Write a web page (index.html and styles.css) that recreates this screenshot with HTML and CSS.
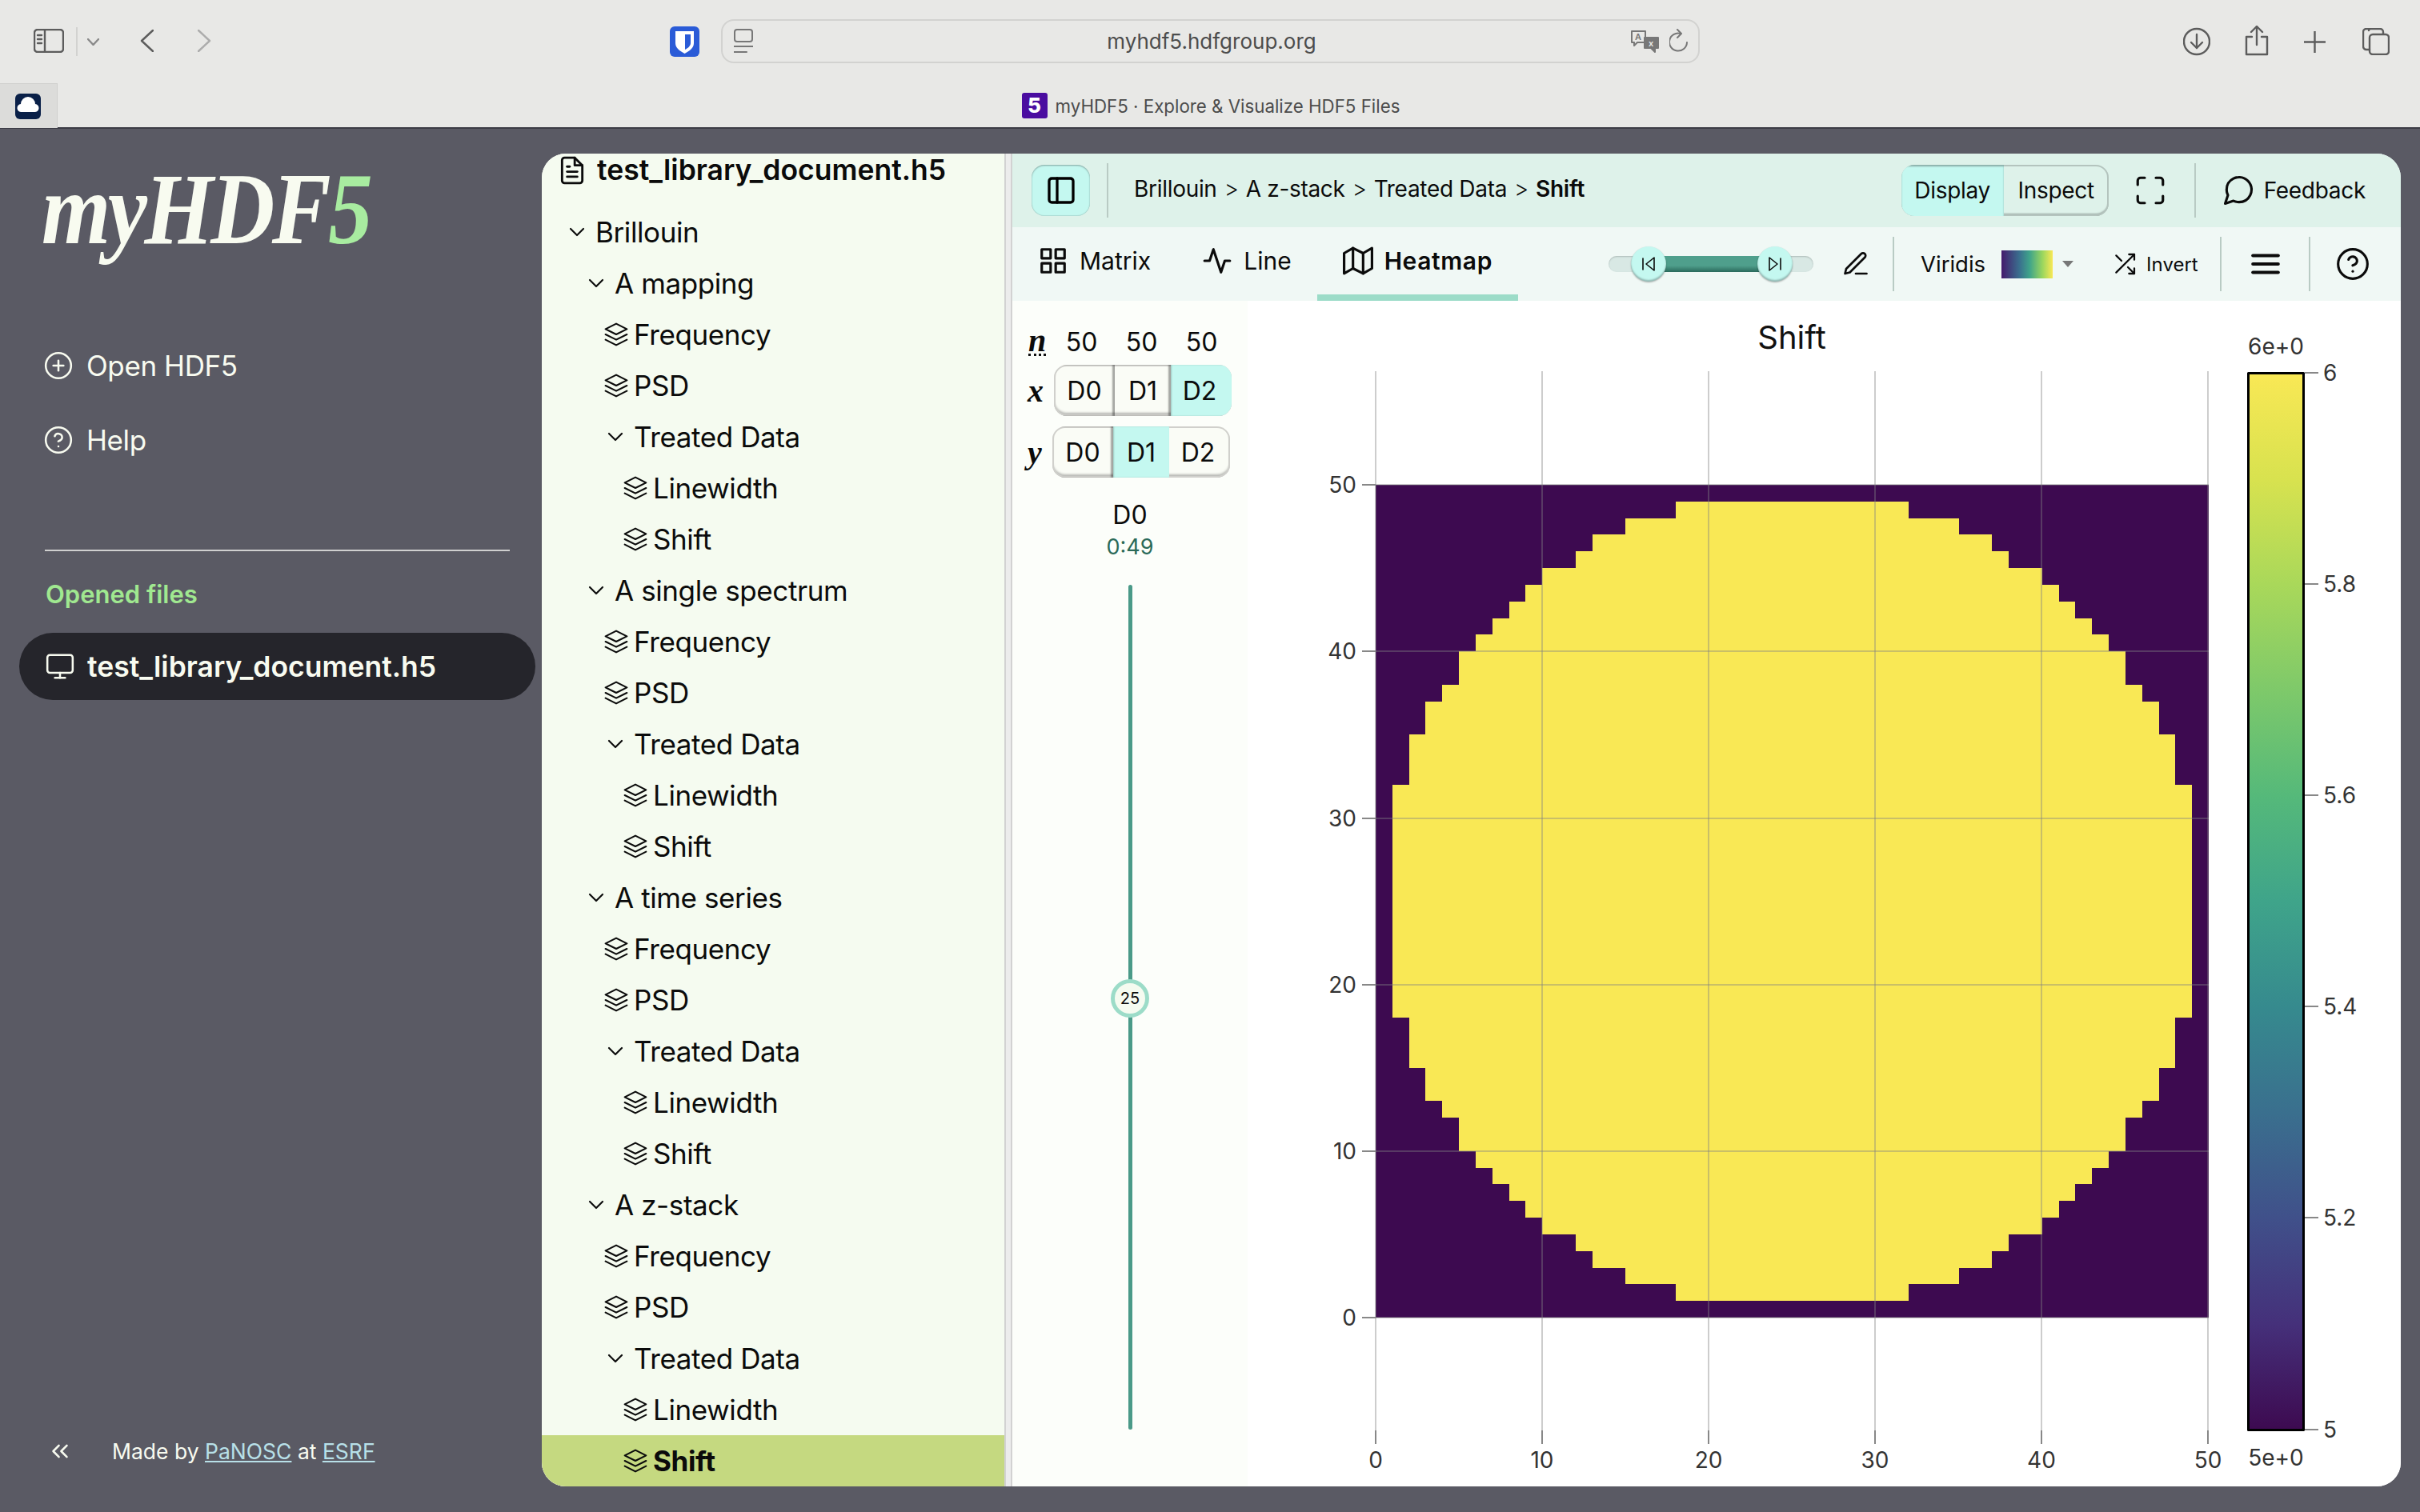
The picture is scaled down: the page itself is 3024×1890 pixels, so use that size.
FILE: index.html
```html
<!DOCTYPE html>
<html lang="en">
<head>
  <meta charset="utf-8">
  <title>myHDF5 · Explore &amp; Visualize HDF5 Files</title>
  <link rel="stylesheet" href="styles.css">
</head>
<body>
  <!-- Icon sprite -->
  <svg class="sprite" xmlns="http://www.w3.org/2000/svg">
    <symbol id="i-chev" viewBox="0 0 24 24"><polyline points="6 9 12 15 18 9"/></symbol>
    <symbol id="i-layers" viewBox="0 0 24 24"><polygon points="12 2 2 7 12 12 22 7 12 2"/><polyline points="2 17 12 22 22 17"/><polyline points="2 12 12 17 22 12"/></symbol>
    <symbol id="i-file" viewBox="0 0 24 24"><path d="M14 2H6a2 2 0 0 0-2 2v16a2 2 0 0 0 2 2h12a2 2 0 0 0 2-2V8z"/><polyline points="14 2 14 8 20 8"/><line x1="16" y1="13" x2="8" y2="13"/><line x1="16" y1="17" x2="8" y2="17"/><polyline points="10 9 9 9 8 9"/></symbol>
    <symbol id="i-plus" viewBox="0 0 24 24"><circle cx="12" cy="12" r="10"/><line x1="12" y1="8" x2="12" y2="16"/><line x1="8" y1="12" x2="16" y2="12"/></symbol>
    <symbol id="i-help" viewBox="0 0 24 24"><circle cx="12" cy="12" r="10"/><path d="M9.09 9a3 3 0 0 1 5.83 1c0 2-3 3-3 3"/><line x1="12" y1="17" x2="12.01" y2="17"/></symbol>
    <symbol id="i-monitor" viewBox="0 0 24 24"><rect x="2" y="3" width="20" height="14" rx="2"/><line x1="8" y1="21" x2="16" y2="21"/><line x1="12" y1="17" x2="12" y2="21"/></symbol>
    <symbol id="i-chevs" viewBox="0 0 24 24"><polyline points="11 17 6 12 11 7"/><polyline points="18 17 13 12 18 7"/></symbol>
    <symbol id="i-sidebar" viewBox="0 0 24 24"><rect x="3" y="3" width="18" height="18" rx="2"/><line x1="9" y1="3" x2="9" y2="21"/></symbol>
    <symbol id="i-max" viewBox="0 0 24 24"><path d="M8 3H5a2 2 0 0 0-2 2v3m18 0V5a2 2 0 0 0-2-2h-3m0 18h3a2 2 0 0 0 2-2v-3M3 16v3a2 2 0 0 0 2 2h3"/></symbol>
    <symbol id="i-msg" viewBox="0 0 24 24"><path d="M21 11.5a8.38 8.38 0 0 1-.9 3.8 8.5 8.5 0 0 1-7.6 4.7 8.38 8.38 0 0 1-3.8-.9L3 21l1.9-5.7a8.38 8.38 0 0 1-.9-3.8 8.5 8.5 0 0 1 4.7-7.6 8.38 8.38 0 0 1 3.8-.9h.5a8.48 8.48 0 0 1 8 8v.5z"/></symbol>
    <symbol id="i-grid" viewBox="0 0 24 24"><rect x="3" y="3" width="7" height="7"/><rect x="14" y="3" width="7" height="7"/><rect x="14" y="14" width="7" height="7"/><rect x="3" y="14" width="7" height="7"/></symbol>
    <symbol id="i-line" viewBox="0 0 24 24"><polyline points="22 12 18 12 15 21 9 3 6 12 2 12"/></symbol>
    <symbol id="i-map" viewBox="0 0 24 24"><polygon points="1 6 1 22 8 18 16 22 23 18 23 2 16 6 8 2 1 6"/><line x1="8" y1="2" x2="8" y2="18"/><line x1="16" y1="6" x2="16" y2="22"/></symbol>
    <symbol id="i-pen" viewBox="0 0 24 24"><path d="M12 20h9"/><path d="M16.5 3.5a2.121 2.121 0 0 1 3 3L7 19l-4 1 1-4L16.5 3.5z"/></symbol>
    <symbol id="i-shuffle" viewBox="0 0 24 24"><polyline points="16 3 21 3 21 8"/><line x1="4" y1="20" x2="21" y2="3"/><polyline points="21 16 21 21 16 21"/><line x1="15" y1="15" x2="21" y2="21"/><line x1="4" y1="4" x2="9" y2="9"/></symbol>
    <symbol id="i-menu" viewBox="0 0 24 24"><line x1="3" y1="12" x2="21" y2="12"/><line x1="3" y1="6" x2="21" y2="6"/><line x1="3" y1="18" x2="21" y2="18"/></symbol>
    <symbol id="i-back" viewBox="0 0 24 24"><polygon points="19 20 9 12 19 4 19 20"/><line x1="5" y1="19" x2="5" y2="5"/></symbol>
    <symbol id="i-next" viewBox="0 0 24 24"><polygon points="5 4 15 12 5 20 5 4"/><line x1="19" y1="5" x2="19" y2="19"/></symbol>
  </svg>

  <!-- Browser chrome -->
  <header class="chrome">
    <div class="toolbar">
      <svg class="c-sidebar" viewBox="0 0 38 30"><rect x="1" y="1" width="36" height="28" rx="4"/><line x1="14" y1="1" x2="14" y2="29"/><line x1="5" y1="8" x2="10" y2="8"/><line x1="5" y1="13" x2="10" y2="13"/><line x1="5" y1="18" x2="10" y2="18"/></svg>
      <span class="c-sep"></span>
      <svg class="c-drop" viewBox="0 0 15 9"><polyline points="1 1 7.5 8 14 1"/></svg>
      <svg class="c-back" viewBox="0 0 17 28"><polyline points="16 1 2 14 16 27"/></svg>
      <svg class="c-fwd" viewBox="0 0 17 28"><polyline points="1 1 15 14 1 27"/></svg>
      <svg class="c-warden" viewBox="0 0 37 38"><rect width="37" height="38" rx="6" fill="#2a5bd7"/><path d="M7 6h23v15c0 6-6 10-11.500 13C13 31 7 27 7 21z" fill="#fff"/><path d="M19 10h7v11c0 3-3 6-7 8z" fill="#2a5bd7"/></svg>
      <div class="urlbar">
        <svg class="u-page" viewBox="0 0 24 32"><rect x="1" y="1" width="22" height="15" rx="3"/><line x1="0" y1="22" x2="24" y2="22"/><line x1="0" y1="29" x2="16" y2="29"/></svg>
        <span class="u-text">myhdf5.hdfgroup.org</span>
        <svg class="u-trans" viewBox="0 0 37 30"><path d="M2 2h17v14H9l-4 4v-4H2z" class="thin"/><path d="M18 10h17v13h-4v5l-5-5h-8z" class="solid"/><text class="t-a" x="6" y="13">A</text><text class="t-x" x="23" y="21">x</text></svg>
        <svg class="u-reload" viewBox="0 0 24 32"><path d="M14 6a11 11 0 1 0 8 11"/><polyline points="10 1 15 6 10 11"/></svg>
      </div>
      <svg class="c-dl" viewBox="0 0 34 36"><circle cx="17" cy="18" r="16"/><line x1="17" y1="9" x2="17" y2="26"/><polyline points="10 19 17 26 24 19"/></svg>
      <svg class="c-share" viewBox="0 0 30 38"><path d="M9 14H2v22h26V14h-7"/><line x1="15" y1="1" x2="15" y2="24"/><polyline points="8 8 15 1 22 8"/></svg>
      <svg class="c-plus" viewBox="0 0 27 27"><line x1="13.500" y1="0" x2="13.500" y2="27"/><line x1="0" y1="13.500" x2="27" y2="13.500"/></svg>
      <svg class="c-tabs" viewBox="0 0 34 34"><path d="M8 3a2 2 0 0 1 2-2h12a4 4 0 0 1 4 4v2"/><rect x="9" y="8" width="24" height="25" rx="4"/><path d="M9 27H5a4 4 0 0 1-4-4V5a4 4 0 0 1 4-4h4"/></svg>
    </div>
    <div class="tabs">
      <div class="pinned">
        <svg viewBox="0 0 32 32"><rect width="32" height="32" rx="6" fill="#0a2048"/><path d="M8 23a5 5 0 0 1-1-10 9 9 0 0 1 18 0 5 5 0 0 1-1 10z" fill="#fff"/></svg>
      </div>
      <div class="tab-title"><span class="favicon">5</span>myHDF5 · Explore &amp; Visualize HDF5 Files</div>
    </div>
  </header>

  <main class="app">
    <!-- Left navigation -->
    <aside class="nav">
      <div class="logo">myHDF<em>5</em></div>
      <a class="nav-link nav-first"><svg class="ico-nav"><use href="#i-plus"/></svg>Open HDF5</a>
      <a class="nav-link"><svg class="ico-nav"><use href="#i-help"/></svg>Help</a>
      <hr class="nav-rule">
      <h2 class="nav-head">Opened files</h2>
      <div class="file-pill"><svg class="ico-nav"><use href="#i-monitor"/></svg>test_library_document.h5</div>
      <footer class="nav-foot">
        <svg class="ico-chevs"><use href="#i-chevs"/></svg>
        <span>Made by <a>PaNOSC</a> at <a>ESRF</a></span>
      </footer>
    </aside>

    <div class="card">
      <!-- File tree -->
      <section class="tree">
        <div class="tree-head"><svg class="ico-file"><use href="#i-file"/></svg>test_library_document.h5</div>
        <div class="row l0"><svg><use href="#i-chev"/></svg>Brillouin</div>

        <div class="row l1"><svg><use href="#i-chev"/></svg>A mapping</div>
        <div class="row l2 leaf"><svg><use href="#i-layers"/></svg>Frequency</div>
        <div class="row l2 leaf"><svg><use href="#i-layers"/></svg>PSD</div>
        <div class="row l2"><svg><use href="#i-chev"/></svg>Treated Data</div>
        <div class="row l3 leaf"><svg><use href="#i-layers"/></svg>Linewidth</div>
        <div class="row l3 leaf"><svg><use href="#i-layers"/></svg>Shift</div>

        <div class="row l1"><svg><use href="#i-chev"/></svg>A single spectrum</div>
        <div class="row l2 leaf"><svg><use href="#i-layers"/></svg>Frequency</div>
        <div class="row l2 leaf"><svg><use href="#i-layers"/></svg>PSD</div>
        <div class="row l2"><svg><use href="#i-chev"/></svg>Treated Data</div>
        <div class="row l3 leaf"><svg><use href="#i-layers"/></svg>Linewidth</div>
        <div class="row l3 leaf"><svg><use href="#i-layers"/></svg>Shift</div>

        <div class="row l1"><svg><use href="#i-chev"/></svg>A time series</div>
        <div class="row l2 leaf"><svg><use href="#i-layers"/></svg>Frequency</div>
        <div class="row l2 leaf"><svg><use href="#i-layers"/></svg>PSD</div>
        <div class="row l2"><svg><use href="#i-chev"/></svg>Treated Data</div>
        <div class="row l3 leaf"><svg><use href="#i-layers"/></svg>Linewidth</div>
        <div class="row l3 leaf"><svg><use href="#i-layers"/></svg>Shift</div>

        <div class="row l1"><svg><use href="#i-chev"/></svg>A z-stack</div>
        <div class="row l2 leaf"><svg><use href="#i-layers"/></svg>Frequency</div>
        <div class="row l2 leaf"><svg><use href="#i-layers"/></svg>PSD</div>
        <div class="row l2"><svg><use href="#i-chev"/></svg>Treated Data</div>
        <div class="row l3 leaf"><svg><use href="#i-layers"/></svg>Linewidth</div>
        <div class="row l3 leaf selected"><svg><use href="#i-layers"/></svg>Shift</div>
      </section>

      <div class="split"></div>

      <!-- Visualizer -->
      <section class="vis">
        <div class="bar-top">
          <button class="btn-toggle"><svg class="ico-toggle"><use href="#i-sidebar"/></svg></button>
          <span class="sep sep-top"></span>
          <nav class="crumbs">
            <span>Brillouin</span><i>&gt;</i><span>A z-stack</span><i>&gt;</i><span>Treated Data</span><i>&gt;</i><b>Shift</b>
          </nav>
          <div class="switch">
            <span class="on">Display</span><span>Inspect</span>
          </div>
          <svg class="ico-max"><use href="#i-max"/></svg>
          <span class="sep sep-feedback"></span>
          <svg class="ico-msg"><use href="#i-msg"/></svg>
          <span class="feedback">Feedback</span>
        </div>

        <div class="bar-tools">
          <div class="tab"><svg><use href="#i-grid"/></svg>Matrix</div>
          <div class="tab"><svg><use href="#i-line"/></svg>Line</div>
          <div class="tab active"><svg><use href="#i-map"/></svg>Heatmap</div>

          <div class="range">
            <div class="range-fill"></div>
            <span class="thumb thumb-a"><svg><use href="#i-back"/></svg></span>
            <span class="thumb thumb-b"><svg><use href="#i-next"/></svg></span>
          </div>
          <svg class="ico-pen"><use href="#i-pen"/></svg>
          <span class="sep sep-a"></span>
          <span class="cmap-name">Viridis</span>
          <span class="cmap-swatch"></span>
          <span class="caret"></span>
          <svg class="ico-shuffle"><use href="#i-shuffle"/></svg>
          <span class="invert">Invert</span>
          <span class="sep sep-b"></span>
          <svg class="ico-menu"><use href="#i-menu"/></svg>
          <span class="sep sep-c"></span>
          <svg class="ico-help"><use href="#i-help"/></svg>
        </div>

        <div class="vis-body">
          <div class="dims">
            <div class="dim-row dim-n">
              <span class="axis axis-n">n</span><span class="n-val">50</span><span class="n-val">50</span><span class="n-val">50</span>
            </div>
            <div class="dim-row dim-x">
              <span class="axis">x</span>
              <div class="seg"><span>D0</span><span>D1</span><span class="on">D2</span></div>
            </div>
            <div class="dim-row dim-y">
              <span class="axis">y</span>
              <div class="seg"><span>D0</span><span class="on">D1</span><span>D2</span></div>
            </div>
            <div class="slice-name">D0</div>
            <div class="slice-range">0:49</div>
            <div class="slice-track"><span class="slice-thumb">25</span></div>
          </div>

          <div class="plot">
            <svg class="plot-svg" viewBox="1559 376 1441 1482">
              <defs>
                <linearGradient id="viridis" x1="0" y1="0" x2="0" y2="1">
                  <stop offset="0" stop-color="#f9e855"/>
                  <stop offset=".1" stop-color="#d8e24f"/>
                  <stop offset=".2" stop-color="#a9d85a"/>
                  <stop offset=".3" stop-color="#7ec96a"/>
                  <stop offset=".4" stop-color="#55b97a"/>
                  <stop offset=".5" stop-color="#3fa48a"/>
                  <stop offset=".6" stop-color="#368a8e"/>
                  <stop offset=".7" stop-color="#3a6f8e"/>
                  <stop offset=".8" stop-color="#40508a"/>
                  <stop offset=".9" stop-color="#45307a"/>
                  <stop offset="1" stop-color="#3d0a50"/>
                </linearGradient>
              </defs>

              <text class="p-title" x="2239" y="436">Shift</text>

              <!-- heatmap: 50 x 50 cells, 20.82px each -->
              <svg class="heat" x="1719" y="606" width="1041" height="1041" viewBox="0 0 50 50" shape-rendering="crispEdges">
                <rect width="50" height="50" fill="#3d0a50"/>
                <path fill="#f9e855" d="M18 1H32V2H35V3H37V4H38V5H40V6H41V7H42V8H43V9H44V10H45V12H46V13H47V15H48V18H49V32H48V35H47V37H46V38H45V40H44V41H43V42H42V43H41V44H40V45H38V46H37V47H35V48H32V49H18V48H15V47H13V46H12V45H10V44H9V43H8V42H7V41H6V40H5V38H4V37H3V35H2V32H1V18H2V15H3V13H4V12H5V10H6V9H7V8H8V7H9V6H10V5H12V4H13V3H15V2H18Z"/>
              </svg>

              <g class="grid">
                <line x1="1719" y1="464" x2="1719" y2="1788"/>
                <line x1="1927" y1="464" x2="1927" y2="1788"/>
                <line x1="2135" y1="464" x2="2135" y2="1788"/>
                <line x1="2343" y1="464" x2="2343" y2="1788"/>
                <line x1="2551" y1="464" x2="2551" y2="1788"/>
                <line x1="2759" y1="464" x2="2759" y2="1788"/>
                <line x1="1719" y1="606" x2="2760" y2="606"/>
                <line x1="1719" y1="814" x2="2760" y2="814"/>
                <line x1="1719" y1="1023" x2="2760" y2="1023"/>
                <line x1="1719" y1="1231" x2="2760" y2="1231"/>
                <line x1="1719" y1="1439" x2="2760" y2="1439"/>
                <line x1="1719" y1="1647" x2="2760" y2="1647"/>
              </g>

              <g class="ticks">
                <line x1="1719" y1="1788" x2="1719" y2="1805"/>
                <line x1="1927" y1="1788" x2="1927" y2="1805"/>
                <line x1="2135" y1="1788" x2="2135" y2="1805"/>
                <line x1="2343" y1="1788" x2="2343" y2="1805"/>
                <line x1="2551" y1="1788" x2="2551" y2="1805"/>
                <line x1="2759" y1="1788" x2="2759" y2="1805"/>
                <line x1="1702" y1="606" x2="1719" y2="606"/>
                <line x1="1702" y1="814" x2="1719" y2="814"/>
                <line x1="1702" y1="1023" x2="1719" y2="1023"/>
                <line x1="1702" y1="1231" x2="1719" y2="1231"/>
                <line x1="1702" y1="1439" x2="1719" y2="1439"/>
                <line x1="1702" y1="1647" x2="1719" y2="1647"/>
                <line x1="2880" y1="466" x2="2897" y2="466"/>
                <line x1="2880" y1="730" x2="2897" y2="730"/>
                <line x1="2880" y1="994" x2="2897" y2="994"/>
                <line x1="2880" y1="1258" x2="2897" y2="1258"/>
                <line x1="2880" y1="1522" x2="2897" y2="1522"/>
                <line x1="2880" y1="1787" x2="2897" y2="1787"/>
              </g>

              <g class="lbl lbl-x">
                <text x="1719" y="1835">0</text>
                <text x="1927" y="1835">10</text>
                <text x="2135" y="1835">20</text>
                <text x="2343" y="1835">30</text>
                <text x="2551" y="1835">40</text>
                <text x="2759" y="1835">50</text>
              </g>
              <g class="lbl lbl-y">
                <text x="1695" y="616">50</text>
                <text x="1695" y="824">40</text>
                <text x="1695" y="1033">30</text>
                <text x="1695" y="1241">20</text>
                <text x="1695" y="1449">10</text>
                <text x="1695" y="1657">0</text>
              </g>

              <rect class="cbar" x="2809.500" y="466.500" width="69" height="1321" fill="url(#viridis)"/>
              <g class="lbl lbl-c">
                <text x="2903" y="476">6</text>
                <text x="2903" y="740">5.8</text>
                <text x="2903" y="1004">5.6</text>
                <text x="2903" y="1268">5.4</text>
                <text x="2903" y="1532">5.2</text>
                <text x="2903" y="1797">5</text>
              </g>
              <g class="lbl lbl-x">
                <text x="2844" y="443">6e+0</text>
                <text x="2844" y="1832">5e+0</text>
              </g>
            </svg>
          </div>
        </div>
      </section>
    </div>
  </main>
</body>
</html>
```
FILE: styles.css
```css
/* Reset & variables */
* { box-sizing: border-box; margin: 0; padding: 0; }
:root {
  --chrome: #e8e8e6;
  --slate: #5a5a64;
  --ink: #0b0b0b;
  --cream: #f8fbf0;
  --mint: #c4f8f0;
  --teal: #4a9a88;
  --rule: #b9cbc4;
}
html, body { width: 3024px; height: 1890px; overflow: hidden; }
body {
  font-family: "Inter", "Liberation Sans", sans-serif;
  color: var(--ink);
  background: var(--slate);
  display: flex;
  flex-direction: column;
}
svg { fill: none; stroke: currentColor; stroke-width: 2; stroke-linecap: round; stroke-linejoin: round; flex: none; }
.sprite { width: 0; height: 0; position: absolute; }

/* Browser chrome */
.chrome { height: 161px; background: var(--chrome); border-bottom: 2px solid #3b3b45; flex: none; }
.toolbar { height: 104px; display: flex; align-items: center; padding-left: 42px; color: #5c5c5c; }
.toolbar svg { stroke-width: 2.4; }
.c-sidebar { width: 38px; height: 30px; margin-top: -3px; }
.c-sep { width: 2px; height: 36px; background: #d2d2d0; margin-left: 15px; }
.c-drop { width: 15px; height: 9px; margin-left: 12px; color: #8a8a8a; }
.c-back { width: 17px; height: 28px; margin-left: 51px; margin-top: -2px; }
.c-fwd { width: 17px; height: 28px; margin-left: 55px; margin-top: -2px; color: #acacac; }
.toolbar .c-warden { width: 37px; height: 38px; margin-left: 573px; stroke: none; }
.urlbar {
  width: 1223px; height: 55px; margin-left: 27px; margin-top: -1px;
  border: 2px solid #d2d2d0; border-radius: 16px;
  display: flex; align-items: center; padding: 0 12px 0 14px;
}
.toolbar .u-page { width: 24px; height: 32px; stroke-width: 2; color: #777; }
.u-text { flex: 1; text-align: center; font-size: 26px; color: #4c4c4c; padding-left: 50px; }
.toolbar .u-trans { width: 37px; height: 30px; stroke-width: 2; color: #777; }
.u-trans .solid { fill: #777; }
.u-trans text { stroke: none; font-size: 11px; font-weight: 600; }
.t-a { fill: #777; }
.t-x { fill: #e8e8e6; }
.toolbar .u-reload { width: 24px; height: 32px; margin-left: 12px; stroke-width: 2; color: #777; }
.c-dl { width: 34px; height: 36px; margin-left: 604px; }
.c-share { width: 30px; height: 38px; margin-left: 43px; margin-top: -3px; }
.c-plus { width: 27px; height: 27px; margin-left: 44px; }
.c-tabs { width: 34px; height: 34px; margin-left: 46px; }

.tabs { height: 56px; position: relative; display: flex; justify-content: center; align-items: center; }
.pinned { position: absolute; left: 0; top: 0; width: 72px; height: 56px; background: #dcdcda; border-right: 1px solid #d0d0ce; border-top: 1px solid #d0d0ce; padding: 12px 0 0 19px; }
.pinned svg { width: 32px; height: 32px; stroke: none; display: block; }
.tab-title { display: flex; align-items: center; font-size: 22.3px; color: #4c4c4c; margin-left: 2px; }
.favicon {
  width: 32px; height: 32px; border-radius: 3px; background: #4a0ca0; color: #fff;
  font-weight: 800; font-size: 26px; text-align: center; line-height: 32px; margin-right: 10px;
}

/* Page */
.app { flex: 1; display: flex; min-height: 0; }
.nav { width: 677px; flex: none; color: var(--cream); position: relative; padding-left: 24px; }
.logo {
  font-family: "Liberation Serif", serif; font-style: italic; font-weight: 700;
  font-size: 126px; line-height: 130px; color: var(--cream);
  margin: 36px 0 0 28px; letter-spacing: -4px; white-space: nowrap;
  transform: scaleX(.88); transform-origin: left center;
}
.logo em { color: #a8eca0; }
.nav-link { display: flex; align-items: center; font-size: 35px; letter-spacing: -.4px; height: 60px; padding-left: 30px; gap: 16px; }
.nav-first { margin-top: 100px; margin-bottom: 33px; }
.ico-nav { width: 38px; height: 38px; stroke-width: 1.6; flex: none; }
.nav-rule { border: 0; height: 2px; background: #cfcfcf; width: 581px; margin: 107px 0 0 32px; }
.nav-head { font-size: 31px; font-weight: 600; color: #a0e890; margin: 35px 0 0 33px; line-height: 38px; }
.file-pill {
  width: 645px; height: 84px; margin-top: 29px; border-radius: 42px; background: #25252b;
  display: flex; align-items: center; gap: 15px; padding-left: 32px; font-size: 35.500px; font-weight: 600;
}
.nav-foot { position: absolute; left: 0; bottom: 59px; display: flex; align-items: center; font-size: 26.500px; padding-left: 58px; }
.ico-chevs { width: 34px; height: 34px; margin-right: 48px; stroke-width: 1.8; }
.nav-foot a { color: #b8e0e8; text-decoration: underline; }

/* Card */
.card { width: 2323px; height: 1666px; margin-top: 31px; border-radius: 30px; overflow: hidden; display: flex; background: #fff; }

/* File tree */
.tree { width: 578px; flex: none; background: #f5fbf0; font-size: 35px; letter-spacing: -.4px; }
.tree-head { height: 66px; display: flex; align-items: flex-start; gap: 12px; padding: 1px 0 0 19px; font-weight: 600; font-size: 35.500px; letter-spacing: 0; line-height: 40px; }
.ico-file { width: 38px; height: 38px; margin-top: 1px; stroke-width: 1.8; }
.row { height: 64px; display: flex; align-items: center; white-space: nowrap; }
.row svg { width: 32px; height: 32px; margin-right: 7px; stroke-width: 1.6; }
.row.leaf svg { margin-right: 6px; margin-left: 1px; }
.l0 { padding-left: 28px; }
.l1 { padding-left: 52px; }
.l2 { padding-left: 76px; }
.l3 { padding-left: 100px; }
.selected { background: #c5d980; font-weight: 700; }
.split { width: 10px; flex: none; background: #ececec; border-left: 2px solid #d2d2d2; border-right: 2px solid #d2d2d2; }

/* Visualizer */
.vis { flex: 1; display: flex; flex-direction: column; min-width: 0; }
.sep { width: 2px; background: var(--rule); flex: none; }
.bar-top { height: 92px; background: #def2ea; display: flex; align-items: center; padding-left: 24px; flex: none; }
.btn-toggle {
  width: 73px; height: 64px; border: 0; border-radius: 16px; background: var(--mint);
  box-shadow: inset 0 1px 2px rgba(0,0,0,.35), inset 0 -1px 1px rgba(0,0,0,.1);
  display: flex; align-items: center; justify-content: center;
}
.ico-toggle { width: 40px; height: 40px; }
.sep-top { height: 68px; margin-left: 21px; }
.crumbs { display: flex; align-items: center; font-size: 28px; letter-spacing: -.3px; margin-left: 32px; margin-top: -4px; }
.crumbs i { font-style: normal; font-weight: 300; margin: 0 9px; }
.crumbs b { font-weight: 600; }
.switch {
  margin-left: auto; display: flex; height: 64px; border-radius: 16px; overflow: hidden; font-size: 28px; letter-spacing: -.3px;
  box-shadow: inset 0 0 0 2px #b4c4be, inset 0 -3px 2px rgba(0,0,0,.3);
}
.switch span { display: flex; align-items: center; justify-content: center; width: 128px; }
.switch span.on { background: var(--mint); box-shadow: inset 0 2px 2px rgba(0,0,0,.3); }
.switch span + span { width: 131px; }
.ico-max { width: 42px; height: 42px; margin-left: 31px; stroke-width: 1.8; }
.sep-feedback { height: 68px; margin-left: 34px; }
.ico-msg { width: 44px; height: 44px; margin-left: 31px; stroke-width: 1.7; }
.feedback { font-size: 28px; letter-spacing: -.3px; margin-left: 10px; margin-right: 44px; }

.bar-tools { height: 92px; background: #f0f8f5; display: flex; align-items: center; flex: none; }
.tab { height: 92px; display: flex; align-items: center; padding: 0 32px; font-size: 30px; gap: 14px; border-bottom: 8px solid transparent; }
.tab svg { width: 38px; height: 38px; }
.tab.active { border-bottom-color: #9cdcc8; font-weight: 600; letter-spacing: .6px; }

.range { position: relative; width: 256px; height: 20px; margin-left: 113px; background: #d8e8e4; border-radius: 10px; box-shadow: inset 0 1px 2px rgba(0,0,0,.2); }
.range-fill { position: absolute; left: 50px; right: 48px; top: 0; bottom: 0; background: linear-gradient(#4f9f8c 60%, #2a6a5c); }
.thumb {
  position: absolute; top: -12px; width: 44px; height: 44px; border-radius: 50%; background: var(--mint);
  box-shadow: inset 0 -2px 2px rgba(0,0,0,.25), 0 1px 2px rgba(0,0,0,.3);
  display: flex; align-items: center; justify-content: center;
}
.thumb svg { width: 24px; height: 24px; stroke-width: 1.6; }
.thumb-a { left: 28px; }
.thumb-b { left: 186px; }
.ico-pen { width: 36px; height: 36px; margin-left: 35px; stroke-width: 1.8; }
.sep-a { height: 68px; margin-left: 28px; }
.cmap-name { font-size: 27.500px; margin-left: 33px; }
.cmap-swatch { width: 64px; height: 35px; margin-left: 20px; background: linear-gradient(90deg, #451a6c, #3a6f8e 35%, #3fa48a 55%, #9ad65e 80%, #f9e855); }
.caret { width: 0; height: 0; margin-left: 12px; border-left: 7px solid transparent; border-right: 7px solid transparent; border-top: 8px solid #777; }
.ico-shuffle { width: 32px; height: 32px; margin-left: 48px; stroke-width: 1.7; }
.invert { font-size: 24px; margin-left: 11px; }
.sep-b { height: 68px; margin-left: 27px; }
.ico-menu { width: 42px; height: 42px; margin-left: 34px; stroke-width: 2.4; }
.sep-c { height: 68px; margin-left: 33px; }
.ico-help { width: 44px; height: 44px; margin-left: 31px; stroke-width: 1.7; }

.vis-body { flex: 1; display: flex; min-height: 0; }

/* Dimension mapper */
.dims { width: 294px; flex: none; background: #fcfefa; font-size: 32px; position: relative; }
.dim-row { display: flex; align-items: center; }
.axis { font-family: "Liberation Serif", serif; font-style: italic; font-weight: 700; font-size: 40px; width: 52px; padding-left: 19px; }
.axis-n { width: 22px; padding-left: 0; margin-left: 20px; border-bottom: 3px dotted #111; line-height: 32px; }
.dim-n { height: 80px; padding-top: 22px; }
.n-val { width: 75px; text-align: center; }
.axis-n + .n-val { margin-left: 7px; }
.dim-y { margin-top: 13px; }
.dim-y .seg { margin-left: -2px; }
.seg {
  display: flex; width: 222px; height: 64px; border-radius: 16px; overflow: hidden; background: #fafcf6;
  box-shadow: inset 0 0 0 2px #d0d0cc, inset 0 -4px 3px rgba(0,0,0,.28);
}
.seg span { width: 76px; display: flex; align-items: center; justify-content: center; box-shadow: inset -3px 0 2px rgba(0,0,0,.35); }
.seg span:nth-child(2) { width: 70px; }
.seg span:last-child { box-shadow: none; padding-right: 4px; }
.seg span.on { background: var(--mint); box-shadow: inset 1px 0 2px rgba(0,0,0,.2); }
.slice-name { text-align: center; width: 294px; margin-top: 29px; line-height: 36px; }
.slice-range { text-align: center; width: 294px; font-size: 27px; color: #2a6a58; margin-top: 5px; line-height: 34px; }
.slice-track { width: 5px; height: 1056px; margin: 30px 0 0 145px; background: var(--teal); position: relative; border-radius: 3px; }
.slice-thumb {
  position: absolute; left: -22px; top: 493px; width: 48px; height: 48px; border-radius: 50%;
  background: #f5fbf0; border: 5px solid #9cdcc8; font-size: 20px;
  display: flex; align-items: center; justify-content: center;
}

/* Plot */
.plot { flex: 1; background: #fff; min-width: 0; }
.plot-svg { width: 100%; height: 100%; display: block; stroke: none; }
.heat { stroke: none; }
.p-title { font-size: 40px; text-anchor: middle; fill: #111; }
.grid line { stroke: rgba(130,130,130,.4); stroke-width: 2; stroke-linecap: butt; }
.ticks line { stroke: #888; stroke-width: 2; stroke-linecap: butt; }
.lbl text { font-size: 28px; fill: #333; }
.lbl-x text { text-anchor: middle; }
.lbl-y text { text-anchor: end; }
.cbar { stroke: #000; stroke-width: 3; }
```
